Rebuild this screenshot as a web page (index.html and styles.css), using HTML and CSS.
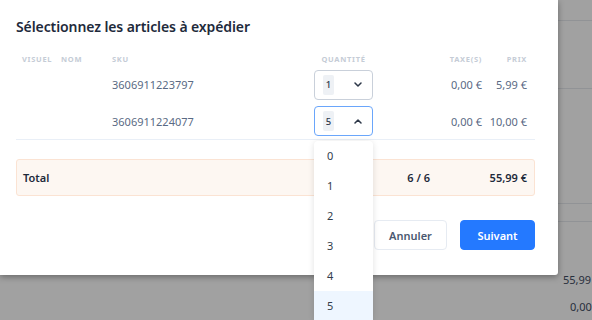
FILE: index.html
```html
<!DOCTYPE html>
<html lang="fr">
<head>
<meta charset="utf-8">
<link rel="stylesheet" href="styles.css">
</head>
<body>
<div class="page">
  <div class="bg-row r1"></div>
  <div class="bg-row r2"></div>
  <div class="bg-row r3"></div>
  <div class="bg-row r4"></div>
  <div class="bg-val v1">55,99</div>
  <div class="bg-val v2">0,00</div>
</div>
<div class="overlay"></div>
<div class="modal">
  <h2 class="title">Sélectionnez les articles à expédier</h2>
  <div class="table">
    <div class="row head">
      <span>Visuel</span><span>Nom</span><span>SKU</span><span class="c">Quantité</span><span class="r">Taxe(s)</span><span class="r">Prix</span>
    </div>
    <div class="row item">
      <span></span><span></span><span class="sku">3606911223797</span>
      <span><div class="select"><span class="badge">1</span><svg width="8" height="5" viewBox="0 0 8 5"><path d="M1 1l3 3 3-3" fill="none" stroke="#2d3748" stroke-width="1.5" stroke-linecap="round" stroke-linejoin="round"/></svg></div></span>
      <span class="r num">0,00 €</span><span class="r num">5,99 €</span>
    </div>
    <div class="row item last">
      <span></span><span></span><span class="sku">3606911224077</span>
      <span><div class="select open"><span class="badge">5</span><svg width="8" height="5" viewBox="0 0 8 5"><path d="M1 4l3-3 3 3" fill="none" stroke="#2d3748" stroke-width="1.5" stroke-linecap="round" stroke-linejoin="round"/></svg></div></span>
      <span class="r num">0,00 €</span><span class="r num">10,00 €</span>
    </div>
  </div>
  <div class="total">
    <span class="lbl">Total</span>
    <span class="cnt">6 / 6</span>
    <span class="sum">55,99 €</span>
  </div>
  <div class="actions">
    <button class="btn ghost">Annuler</button>
    <button class="btn primary">Suivant</button>
  </div>
</div>
<ul class="menu">
  <li>0</li><li>1</li><li>2</li><li>3</li><li>4</li><li class="sel">5</li>
</ul>
</body>
</html>
```
FILE: styles.css
```css
* { box-sizing: border-box; }
html, body { margin: 0; padding: 0; }
body {
  width: 592px; height: 320px; overflow: hidden; position: relative;
  font-family: "Noto Sans", "Open Sans", sans-serif;
  background: #fff;
}
.page { position: absolute; inset: 0; }
.bg-row { position: absolute; left: 0; right: 0; height: 1px; background: #e6e9ee; }
.r1 { top: 20px; } .r2 { top: 88px; } .r3 { top: 203px; } .r4 { top: 221px; }
.bg-val { position: absolute; left: 563px; font-size: 11px; color: #3f4d63; white-space: nowrap; }
.v1 { top: 272px; }
.v2 { top: 299px; left: 570px; }
.overlay { position: absolute; inset: 0; background: rgba(0,0,0,0.37); }
.modal {
  position: absolute; left: 0; top: 0; width: 558px; height: 275px;
  background: #fff; padding: 0 23px 0 16px;
  box-shadow: 0 2px 6px rgba(0,0,0,0.35);
  border-bottom-right-radius: 3px;
}
.title {
  margin: 17px 0 0; font-size: 14px; line-height: 20px; font-weight: 600; color: #1e2a3b;
  letter-spacing: -0.1px;
}
.table { margin-top: 15px; }
.row {
  display: grid; grid-template-columns: 39px 51px 202px 59px 1fr 45px;
  padding: 0 8px 0 6px; align-items: center;
}
.row .r { text-align: right; }
.row .c { text-align: center; }
.head { height: 14px; font-size: 7.5px; font-weight: 700; letter-spacing: 0.7px; text-transform: uppercase; color: #c5ccd6; }
.item { height: 37px; font-size: 11px; color: #5a6a84; }
.item.last { border-bottom: 1px solid #e9eff7; }
.select {
  width: 59px; height: 30px; border: 1px solid #c9d0da; border-radius: 4px;
  display: flex; align-items: center; justify-content: space-between; padding: 0 10px 0 8px;
}
.select.open { border-color: #6aa6fb; }
.badge { background: #eef1f5; width: 11px; height: 20px; border-radius: 2px; font-size: 9.5px; font-weight: 500; color: #2f3b4e; display: flex; align-items: center; justify-content: center; }
.total {
  margin-top: 19px; height: 37px; background: #fdf7f2; border: 1px solid #fbe3d3; border-radius: 3px;
  display: grid; grid-template-columns: 1fr 60px 97px; align-items: center;
  padding: 0 7px 0 6px; font-size: 11px; font-weight: 600; color: #1e2a3b;
}
.cnt, .sum { text-align: right; }
.actions { margin-top: 24px; display: flex; justify-content: flex-end; gap: 13px; }
.btn {
  height: 30px; border-radius: 4px; font-family: inherit; font-size: 11px; font-weight: 600; padding: 0;
}
.ghost { width: 73px; background: #fff; border: 1px solid #e6ebf2; color: #4a5870; }
.primary { width: 75px; background: #2479ff; border: 1px solid #2479ff; color: #fff; }
.menu {
  position: absolute; left: 314px; top: 141px; width: 59px; margin: 0; padding: 0; list-style: none;
  background: #fff; border-radius: 4px; box-shadow: 0 1px 6px rgba(0,0,0,0.12);
}
.menu li { height: 30px; line-height: 30px; padding-left: 13px; font-size: 11px; color: #333d4c; }
.menu li.sel { background: #eef6ff; }
```
